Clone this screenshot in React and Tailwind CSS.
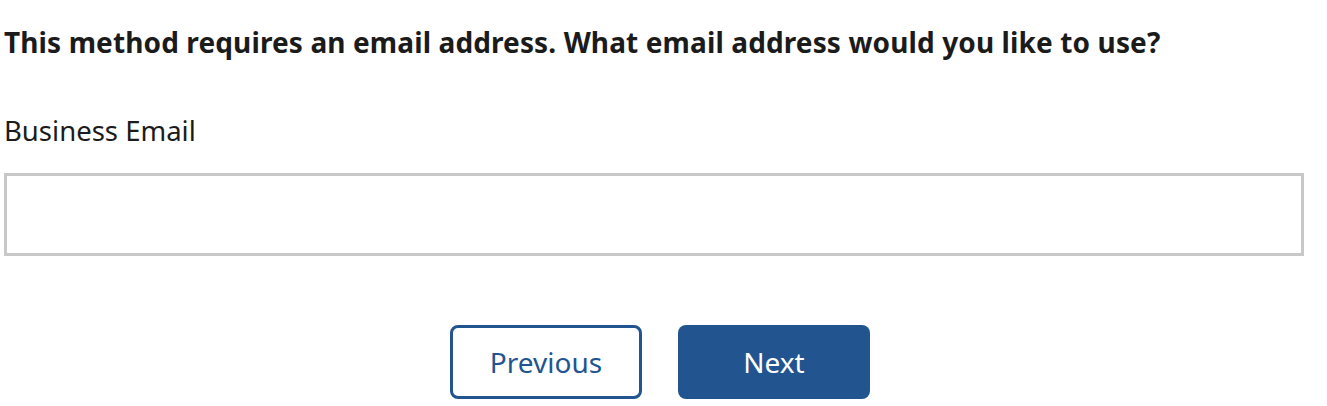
export default function App() {
  return (
    <div className="bg-white min-h-[406px] text-[#1b1b1b]" style={{ fontFamily: '"Noto Sans", "Open Sans", sans-serif' }}>
      <div className="pl-[4px] pr-[23px] pt-[24px]">
        <h2 className="text-[28px] font-bold leading-[36px] tracking-[0.12px]">
          This method requires an email address. What email address would you like to use?
        </h2>

        <label className="block mt-[54px] text-[27.5px] leading-[34px]">Business Email</label>
        <input
          type="email"
          className="block mt-[25px] w-full h-[83px] border-[3px] border-[#c8c8c8] bg-white outline-none px-3 text-[24px]"
        />

        <div className="flex justify-center gap-[36px] mt-[69px] pl-[12px]">
          <button className="w-[192px] h-[74px] rounded-[8px] border-[3px] border-[#22558f] bg-white text-[#22558f] text-[28px] leading-none">
            Previous
          </button>
          <button className="w-[192px] h-[74px] rounded-[8px] bg-[#22558f] text-white text-[28px] leading-none">
            Next
          </button>
        </div>
      </div>
    </div>
  );
}
